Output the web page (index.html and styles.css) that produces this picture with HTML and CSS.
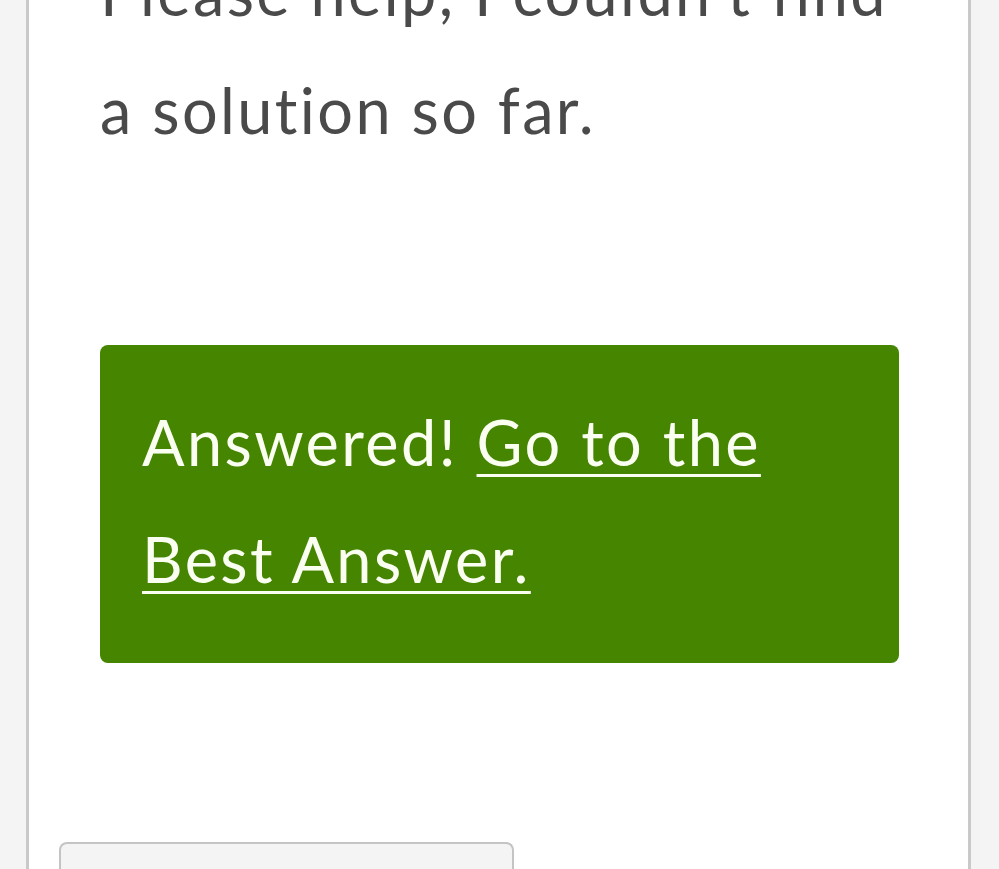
FILE: index.html
```html
<!DOCTYPE html>
<html lang="en">
<head>
<meta charset="utf-8">
<title>Answered</title>
<link rel="stylesheet" href="styles.css">
</head>
<body>
<div class="card">
  <p class="question">Please help, I couldn't find a solution so far.</p>
  <div class="answered">
    Answered! <a href="#" class="best-link">Go to the Best Answer.</a>
  </div>
  <div class="reply-box"></div>
</div>
</body>
</html>
```

FILE: styles.css
```css
html {
  overflow: hidden;
}
body {
  margin: 0;
  background: #f4f4f4;
  font-family: "Lato", "Liberation Sans", sans-serif;
}
.card {
  margin: -67px 0 0 26px;
  width: 939px;
  background: #ffffff;
  border-left: 3px solid #c9c9c9;
  border-right: 3px solid #c9c9c9;
}
.question {
  margin: 0;
  padding: 0 69px 0 71px;
  font-size: 63px;
  line-height: 118px;
  letter-spacing: 2.4px;
  font-variant-ligatures: none;
  color: #4a4a4a;
}
.answered {
  margin: 176px 69px 0 71px;
  background: #468500;
  border-radius: 8px;
  padding: 38px 30px 46px 42px;
  font-size: 63px;
  line-height: 117px;
  letter-spacing: 2.4px;
  font-variant-ligatures: none;
  color: #fbfff2;
}
.best-link {
  color: #fbfff2;
  text-decoration: underline;
  text-decoration-thickness: 3px;
  text-underline-offset: 8px;
}
.reply-box {
  margin: 179px 0 0 30px;
  width: 451px;
  height: 60px;
  background: #f4f4f4;
  border: 2px solid #c4c4c4;
  border-bottom: none;
  border-radius: 8px 8px 0 0;
}
```
